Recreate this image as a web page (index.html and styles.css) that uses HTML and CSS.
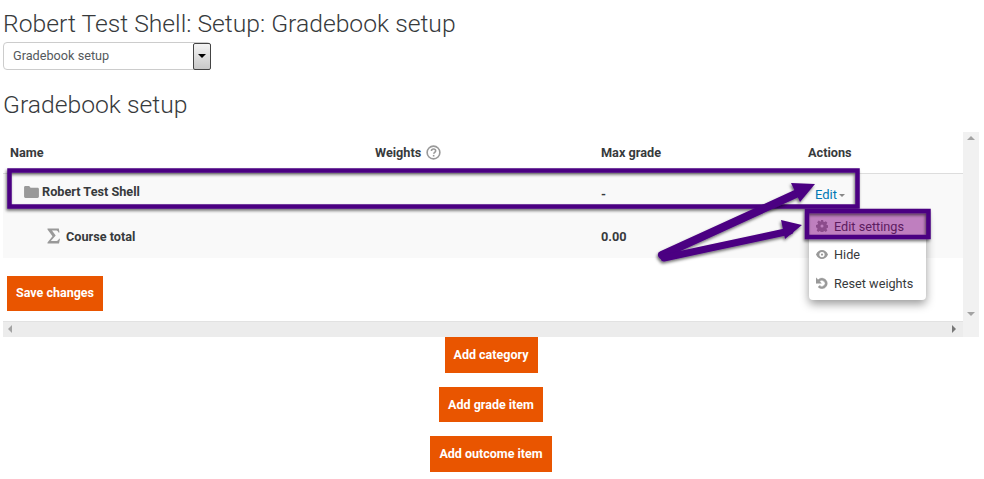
FILE: index.html
```html
<!DOCTYPE html>
<html>
	<head>
		<meta charset="utf-8">
		<title>Gradebook setup</title>
		<link rel="stylesheet" href="styles.css">
	</head>
	<body>
		<div class="page">
			<h1>Robert Test Shell: Setup: Gradebook setup</h1>
			<div class="jump">
				<span class="jumpText">Gradebook setup</span>
				<span class="jumpBtn"><i></i></span>
			</div>
			<h2>Gradebook setup</h2>

			<div class="scroller">
				<div class="pane">
					<table class="grades">
						<thead>
							<tr>
								<th class="colName">Name</th>
								<th class="colWeight">Weights
									<svg class="help" viewBox="0 0 16 16" width="15" height="15">
										<circle cx="8" cy="8" r="6.800" fill="none" stroke="#999" stroke-width="1.700"/>
										<path d="M5.800 6.400c0-1.400 1-2.200 2.300-2.200s2.200.8 2.200 1.900c0 1.700-2 1.600-2 3.300" fill="none" stroke="#999" stroke-width="1.700"/>
										<rect x="7.300" y="10.600" width="1.700" height="1.700" fill="#999"/>
									</svg>
								</th>
								<th class="colMax">Max grade</th>
								<th class="colAct">Actions</th>
							</tr>
						</thead>
						<tbody>
							<tr class="catRow">
								<td>
									<span class="rowName rowCat">
										<svg viewBox="0 0 16 14" width="15" height="13"><path d="M0 2.500C0 1.600.6 1 1.500 1h4l1.500 2h7.500c.9 0 1.500.6 1.500 1.500v8c0 .9-.6 1.500-1.500 1.500h-13C.6 14 0 13.400 0 12.500z" fill="#999"/></svg>
										Robert Test Shell
									</span>
								</td>
								<td></td>
								<td class="num">-</td>
								<td><a class="edit" href="#">Edit<i></i></a></td>
							</tr>
							<tr class="totalRow">
								<td>
									<span class="rowName rowTotal">
										<svg viewBox="0 0 13 16" width="13" height="16"><path d="M.5.500h11.300l.7 4h-1.100C11 3 10.200 2.500 8.500 2.500H5l3.700 5-4.900 5.500h4.700c2 0 2.900-.6 3.500-2.300h1L12 15.500H.5v-1.100l5-6.200-5-6.700z" fill="#999"/></svg>
										Course total
									</span>
								</td>
								<td></td>
								<td class="num">0.00</td>
								<td></td>
							</tr>
						</tbody>
					</table>
					<button class="btn saveBtn">Save changes</button>
				</div>
				<div class="vbar">
					<i class="arrUp"></i>
					<i class="arrDown"></i>
				</div>
				<div class="hbar">
					<i class="arrLeft"></i>
					<i class="arrRight"></i>
				</div>
				<div class="corner"></div>
			</div>

			<div class="addBtns">
				<button class="btn btnCat">Add category</button>
				<button class="btn btnItem">Add grade item</button>
				<button class="btn btnOut">Add outcome item</button>
			</div>

			<!-- dropdown under the Edit link -->
			<ul class="menu">
				<li>
					<svg viewBox="0 0 16 16" width="12" height="12"><path d="M6.500 0h3l.4 2.200 1.300.6 1.900-1.300 2.100 2.100-1.300 1.900.6 1.300 2.200.4v3l-2.200.4-.6 1.300 1.300 1.900-2.100 2.100-1.900-1.300-1.300.6-.4 2.200h-3l-.4-2.200-1.300-.6-1.900 1.300-2.100-2.100 1.300-1.900-.6-1.300L0 9.500v-3l2.200-.4.6-1.300-1.300-1.900 2.100-2.100 1.900 1.300 1.300-.6zM8 6a2 2 0 1 0 0 4 2 2 0 0 0 0-4z" fill="#999" fill-rule="evenodd"/></svg>
					Edit settings
				</li>
				<li>
					<svg viewBox="0 0 16 12" width="12" height="9"><path d="M8 0c3.500 0 6.300 2.200 8 6-1.700 3.800-4.500 6-8 6S1.700 9.800 0 6c1.700-3.800 4.500-6 8-6zm0 2.500a3.500 3.500 0 1 0 0 7 3.500 3.500 0 0 0 0-7zM8 4.500a1.500 1.500 0 1 1 0 3 1.500 1.500 0 0 1 0-3z" fill="#999" fill-rule="evenodd"/></svg>
					Hide
				</li>
				<li>
					<svg viewBox="0 0 16 16" width="12" height="12"><path d="M2.800 3.800A7 7 0 1 1 8 15.500c-2 0-3.900-.9-5.200-2.300l2.200-1.900A4 4 0 1 0 4.900 6l2.300 2.400H0V.9z" fill="#999" stroke="#999" stroke-width=".6"/></svg>
					Reset weights
				</li>
			</ul>

			<!-- purple annotations drawn on top of the screenshot -->
			<svg class="marks" width="984" height="479" viewBox="0 0 984 479">
				<defs>
					<filter id="shade" x="-10%" y="-30%" width="120%" height="170%">
						<feDropShadow dx="-1" dy="2" stdDeviation="1.500" flood-color="#000" flood-opacity=".55"/>
					</filter>
				</defs>
				<rect x="9.500" y="170.500" width="848" height="36" fill="none" stroke="#4b0082" stroke-width="4.500" filter="url(#shade)"/>
				<rect x="807" y="211" width="121.500" height="26" fill="#800080" fill-opacity=".5"/>
				<rect x="807" y="211" width="121.500" height="26" fill="none" stroke="#4b0082" stroke-width="4.500" filter="url(#shade)"/>
				<g fill="#4b0082" filter="url(#shade)">
					<path d="M662 255L800 192" stroke="#4b0082" stroke-width="8" stroke-linecap="round"/>
					<path d="M664 258L790 231" stroke="#4b0082" stroke-width="7" stroke-linecap="round"/>
					<path d="M815 184L791 183 800 202z"/>
					<path d="M802 225L781 220 785 239z"/>
				</g>
			</svg>
		</div>
	</body>
</html>
```

FILE: styles.css
```css
*{
	margin: 0;
	padding: 0;
	box-sizing: border-box;
}
body{
	font-family: Roboto, "Liberation Sans", sans-serif;
	font-size: 12.7px;
	color: #373a3c;
	background-color: #fff;
}
.page{
	position: relative;
	width: 984px;
	height: 479px;
	padding-top: 10px;
	overflow: hidden;
}
h1{
	margin-left: 3px;
	font-size: 24.7px;
	line-height: 28px;
	font-weight: 300;
}
h2{
	margin: 21px 0 0 3px;
	font-size: 24.7px;
	line-height: 28px;
	font-weight: 300;
}
.jump{
	display: flex;
	align-items: center;
	justify-content: space-between;
	width: 208px;
	height: 28px;
	margin: 4px 0 0 3px;
	padding-left: 9px;
	border: 1px solid #ccc;
	border-radius: 4px;
}
.jumpText{
	padding-bottom: 2px;
	color: #55595c;
}
.jumpBtn{
	display: flex;
	align-items: center;
	justify-content: center;
	width: 18px;
	height: 27px;
	margin-right: -1px;
	border: 1px solid #444;
	border-radius: 2px;
	background: linear-gradient(#f4f4f4, #c8c8c8);
}
.jumpBtn i{
	border: 4px solid transparent;
	border-top-color: #000;
	border-bottom-width: 0;
}
.scroller{
	display: grid;
	grid-template-columns: 960px 16px;
	grid-template-rows: 189px 16px;
	width: 976px;
	margin: 13px 0 0 3px;
}
.pane{
	overflow: hidden;
}
.grades{
	width: 960px;
	table-layout: fixed;
	border-collapse: collapse;
}
.grades th{
	height: 41px;
	padding-left: 7px;
	border-bottom: 1px solid #ddd;
	text-align: left;
	font-weight: 700;
	vertical-align: middle;
}
.grades td{
	padding-left: 7px;
	font-weight: 700;
	vertical-align: middle;
}
.colName{
	width: 365px;
}
.colWeight{
	width: 226px;
}
.colMax{
	width: 207px;
}
.help{
	margin-left: 2px;
	vertical-align: -3px;
}
.catRow{
	height: 42px;
	background-color: #f9f9f9;
}
.totalRow{
	height: 43px;
	background-color: #f9f9f9;
}
.totalRow td{
	padding-bottom: 1px;
}
.rowName{
	display: flex;
	align-items: center;
	gap: 3px;
	padding-left: 14px;
}
.rowCat{
	padding-bottom: 6px;
}
.rowTotal{
	gap: 6px;
	padding-left: 37px;
}
.edit{
	display: inline-block;
	padding-left: 7px;
	color: #0078b4;
	font-weight: 400;
	font-size: 13px;
	text-decoration: none;
}
.edit i{
	display: inline-block;
	margin-left: 2px;
	vertical-align: 2px;
	border: 3px solid transparent;
	border-top-color: #888;
	border-bottom-width: 0;
}
.btn{
	border: 0;
	background-color: #e95500;
	color: #fff;
	font-family: Roboto, "Liberation Sans", sans-serif;
	font-size: 12.5px;
	font-weight: 700;
}
.saveBtn,.btnCat,.btnOut{
	padding-bottom: 2px;
}
.saveBtn{
	display: block;
	width: 96px;
	height: 35px;
	margin: 18px 0 0 4px;
}
.vbar{
	position: relative;
	background-color: #f1f1f1;
}
.hbar{
	position: relative;
	border-top: 1px solid #e2e2e2;
	background-color: #ececec;
}
.corner{
	background-color: #f1f1f1;
}
.vbar i,.hbar i{
	position: absolute;
	border: 4px solid transparent;
}
.arrUp{
	top: 4px;
	left: 4px;
	border-bottom-color: #a3a3a3 !important;
	border-top-width: 0 !important;
}
.arrDown{
	bottom: 5px;
	left: 4px;
	border-top-color: #a3a3a3 !important;
	border-bottom-width: 0 !important;
}
.arrLeft{
	top: 3px;
	left: 5px;
	border-right-color: #a3a3a3 !important;
	border-left-width: 0 !important;
}
.arrRight{
	top: 3px;
	right: 7px;
	border-left-color: #777 !important;
	border-right-width: 0 !important;
}
.addBtns{
	display: flex;
	flex-direction: column;
	align-items: center;
	width: 982px;
}
.btnCat{
	width: 93px;
	height: 36px;
}
.btnItem{
	width: 104px;
	height: 35px;
	margin-top: 14px;
}
.btnOut{
	width: 122px;
	height: 36px;
	margin-top: 14px;
}
.menu{
	position: absolute;
	left: 809px;
	top: 212px;
	width: 117px;
	height: 88px;
	list-style: none;
	background-color: #fff;
	border-radius: 4px;
	box-shadow: 0 4px 10px rgba(0,0,0,.4);
}
.menu li{
	display: flex;
	align-items: center;
	gap: 6px;
	height: 28.5px;
	padding-left: 7px;
	color: #373a3c;
}
.marks{
	position: absolute;
	left: 0;
	top: 0;
	pointer-events: none;
}
```
